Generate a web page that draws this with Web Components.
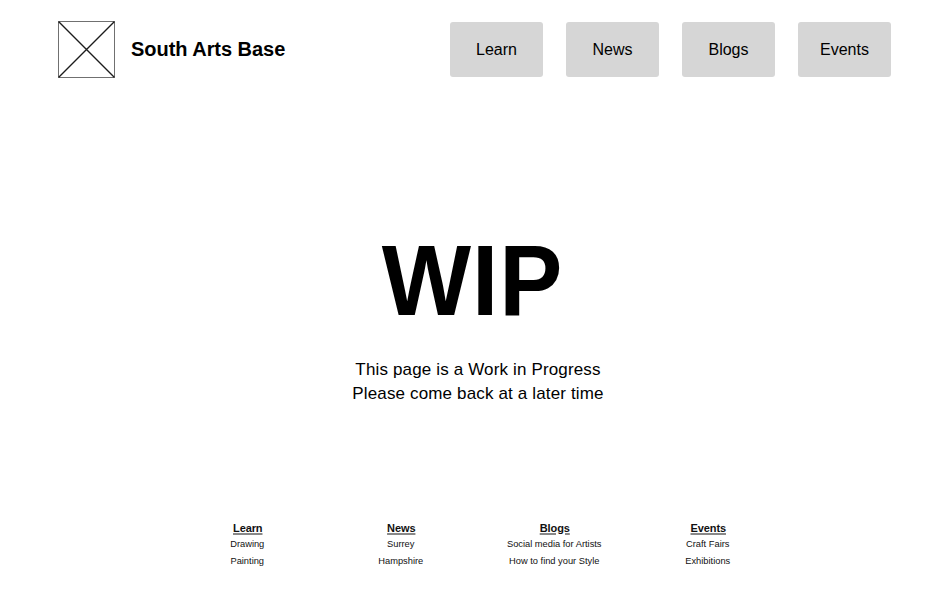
<!DOCTYPE html>
<html lang="en"><head><meta charset="utf-8"><title>South Arts Base</title>
<style>body{margin:0;background:#fff;color:#000;font-family:"Liberation Sans",Arial,sans-serif}</style></head>
<body><arts-page></arts-page>
<script>
const define=(name,html)=>customElements.define(name,class extends HTMLElement{
constructor(){super();this.attachShadow({mode:"open"}).innerHTML=html;}});
define("arts-logo",`<style>:host{display:block;width:57px;height:57px}svg{display:block}</style>
<svg width="57" height="57" viewBox="0 0 57 57" fill="none"><path stroke="#707070" d="M.5.5h56v56H.5z"/><path stroke="#1c1c1c" stroke-width="1.4" d="M.5.5l56 56M56.5.5l-56 56"/></svg>`);
define("nav-button",`<style>:host{display:flex;align-items:center;justify-content:center;width:93px;height:55px;background:#d6d6d6;border-radius:3px;font-size:16px;line-height:24px}</style><slot></slot>`);
define("site-header",`<style>:host{display:flex;justify-content:space-between;align-items:flex-start;padding:21px 61px 0 58px;height:57px}
.brand{display:flex;align-items:center;gap:16px}h1{margin:0 0 2px;font-size:20px;line-height:24px;font-weight:700;letter-spacing:-.04px}nav{display:flex;gap:23px;padding-top:1px}</style>
<div class="brand"><arts-logo></arts-logo><h1>South Arts Base</h1></div>
<nav><nav-button>Learn</nav-button><nav-button>News</nav-button><nav-button>Blogs</nav-button><nav-button>Events</nav-button></nav>`);
define("wip-message",`<style>:host{display:block;text-align:center;padding-top:147px;height:296px}h2{margin:0 7px 0 0;font-size:100px;line-height:110px;letter-spacing:1px;transform:scaleX(.946)}p{margin:23px 0 0 4px;font-size:17px;line-height:24px;letter-spacing:.15px}</style>
<h2>WIP</h2><p>This page is a Work in Progress<br>Please come back at a later time</p>`);
define("footer-column",`<style>:host{display:block;text-align:center;font-size:9.3px;line-height:17px;color:#111}::slotted(b){display:block;font-size:11px;line-height:15px;letter-spacing:-.1px;padding-left:1px;text-decoration:underline #888 1.5px;text-underline-offset:1px}::slotted(span){display:block}</style><slot></slot>`);
define("site-footer",`<style>:host{display:grid;grid-template-columns:repeat(4,153.5px);padding-left:170.5px}</style>
<footer-column><b>Learn</b><span>Drawing</span><span>Painting</span></footer-column>
<footer-column><b>News</b><span>Surrey</span><span>Hampshire</span></footer-column>
<footer-column><b>Blogs</b><span>Social media for Artists</span><span>How to find your Style</span></footer-column>
<footer-column><b>Events</b><span>Craft Fairs</span><span>Exhibitions</span></footer-column>`);
define("arts-page",`<style>:host{display:block;height:595px;overflow:hidden}</style><site-header></site-header><wip-message></wip-message><site-footer></site-footer>`);
</script></body></html>
